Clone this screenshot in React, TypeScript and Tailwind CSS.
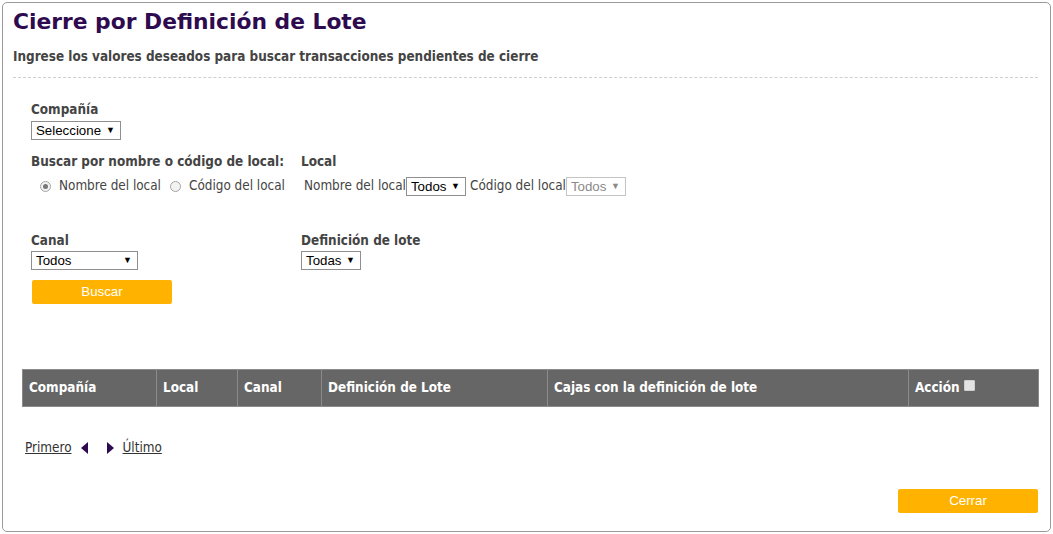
import React from "react";

const font = { fontFamily: '"DejaVu Sans Condensed", "DejaVu Sans", Verdana, sans-serif' };
const titleFont = { fontFamily: '"DejaVu Sans", Verdana, sans-serif' };
const arial = { fontFamily: '"Liberation Sans", Arial, sans-serif' };

function Select({ value, width, disabled }: { value: string; width: number; disabled?: boolean }) {
  return (
    <div
      className={`flex h-[19px] items-center justify-between border bg-white pl-[4px] pr-[5px] text-[13.3px] leading-none ${
        disabled ? "border-[#c4c4c4] text-[#8a8a8a]" : "border-[#8f8f8f] text-black"
      }`}
      style={{ ...arial, width }}
    >
      <span>{value}</span>
      <span className="text-[9px]">▼</span>
    </div>
  );
}

function Radio({ checked }: { checked?: boolean }) {
  return (
    <div className="flex h-[11px] w-[11px] items-center justify-center rounded-full border border-[#a5a5a5] bg-[#f3f3f3]">
      {checked && <div className="h-[5px] w-[5px] rounded-full bg-[#777]" />}
    </div>
  );
}

function Btn({ label }: { label: string }) {
  return (
    <div
      className="flex h-[24px] w-[140px] items-center justify-center rounded-[2px] bg-[#ffb300] text-[13.3px] text-white"
      style={arial}
    >
      {label}
    </div>
  );
}

export default function App() {
  const cols = [
    { label: "Compañía", w: 134 },
    { label: "Local", w: 81 },
    { label: "Canal", w: 84 },
    { label: "Definición de Lote", w: 226 },
    { label: "Cajas con la definición de lote", w: 361 },
  ];
  return (
    <div className="min-h-[534px] bg-white p-[2px]" style={font}>
      <div className="flex h-[530px] flex-col rounded-[5px] border border-[#9a9a9a] pb-[18px] pl-[10px] pr-[12px] pt-[6px]">
        <h1 className="text-[21.8px] font-bold leading-[26px] text-[#2e0b4f]" style={titleFont}>
          Cierre por Definición de Lote
        </h1>
        <p className="mt-[14px] text-[13.4px] font-bold leading-[16px] text-[#444]">
          Ingrese los valores deseados para buscar transacciones pendientes de cierre
        </p>
        <div className="mt-[12px] border-t border-dashed border-[#cfcfcf]" />

        <div className="ml-[18px] text-[13.4px] text-[#444]">
          <div className="mt-[24px] font-bold leading-[16px]">Compañía</div>
          <div className="mt-[3px]">
            <Select value="Seleccione" width={90} />
          </div>

          <div className="mt-[14px] grid grid-cols-[270px_1fr]">
            <div>
              <div className="font-bold leading-[16px]">Buscar por nombre o código de local:</div>
              <div className="mt-[7px] flex h-[19px] items-center pl-[9px]">
                <Radio checked />
                <span className="ml-[8px]">Nombre del local</span>
                <span className="ml-[9px]"><Radio /></span>
                <span className="ml-[8px]">Código del local</span>
              </div>
            </div>
            <div>
              <div className="font-bold leading-[16px]">Local</div>
              <div className="mt-[7px] flex h-[19px] items-center pl-[3px]">
                <span>Nombre del local</span>
                <Select value="Todos" width={60} />
                <span className="ml-[4px]">Código del local</span>
                <Select value="Todos" width={60} disabled />
              </div>
            </div>
          </div>

          <div className="mt-[37px] grid grid-cols-[270px_1fr]">
            <div>
              <div className="font-bold leading-[16px]">Canal</div>
              <div className="mt-[2px]">
                <Select value="Todos" width={107} />
              </div>
            </div>
            <div>
              <div className="font-bold leading-[16px]">Definición de lote</div>
              <div className="mt-[2px]">
                <Select value="Todas" width={60} />
              </div>
            </div>
          </div>
          <div className="ml-[1px] mt-[10px]">
            <Btn label="Buscar" />
          </div>
        </div>

        <div className="-mr-[1px] ml-[9px] mt-[65px] flex h-[38px] border border-[#8a8a8a] bg-[#666] text-[13.4px] font-bold text-white">
          {cols.map((c) => (
            <div
              key={c.label}
              className="flex items-center border-r border-[#8a8a8a] pl-[6px]"
              style={{ width: c.w }}
            >
              {c.label}
            </div>
          ))}
          <div className="flex flex-1 items-center pl-[6px]">
            Acción
            <span className="mb-[6px] ml-[4px] inline-block h-[11px] w-[11px] rounded-[1px] border border-[#cfcfcf] bg-[#e3e3e3]" />
          </div>
        </div>

        <div className="ml-[12px] mt-[33px] flex items-center text-[13.4px] leading-[16px] text-[#333]">
          <span className="underline">Primero</span>
          <svg className="ml-[9px]" width="8" height="12" viewBox="0 0 8 12">
            <polygon points="7,0 7,12 0,6" fill="#2e0b4f" />
          </svg>
          <svg className="ml-[18px]" width="8" height="12" viewBox="0 0 8 12">
            <polygon points="0,0 0,12 7,6" fill="#2e0b4f" />
          </svg>
          <span className="ml-[8px] underline">Último</span>
        </div>

        <div className="mt-auto flex justify-end">
          <Btn label="Cerrar" />
        </div>
      </div>
    </div>
  );
}
